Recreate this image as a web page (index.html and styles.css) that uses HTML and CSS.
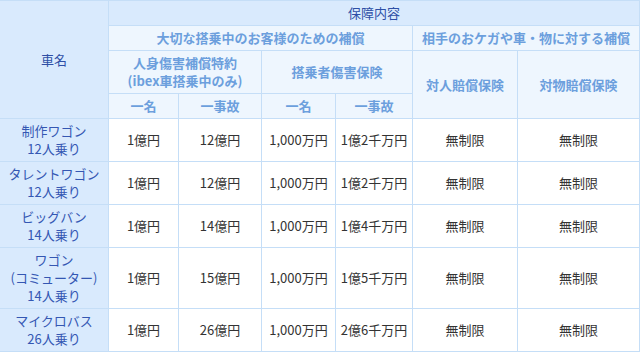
FILE: index.html
```html
<!DOCTYPE html>
<html lang="ja">
<head>
<meta charset="utf-8">
<title>補償内容</title>
<link rel="stylesheet" href="styles.css">
</head>
<body>
<div class="tbl">
  <div class="cell th-main c-name">車名</div>
  <div class="cell th-main c-cover">保障内容</div>
  <div class="cell th-sub c-own">大切な搭乗中のお客様のための補償</div>
  <div class="cell th-sub c-other">相手のおケガや車・物に対する補償</div>
  <div class="cell th-sub c-personal">人身傷害補償特約<br>(ibex車搭乗中のみ)</div>
  <div class="cell th-sub c-passenger">搭乗者傷害保険</div>
  <div class="cell th-sub c-bodily">対人賠償保険</div>
  <div class="cell th-sub c-property">対物賠償保険</div>
  <div class="cell th-sub">一名</div>
  <div class="cell th-sub">一事故</div>
  <div class="cell th-sub">一名</div>
  <div class="cell th-sub">一事故</div>

  <div class="cell car">制作ワゴン<br>12人乗り</div>
  <div class="cell td">1億円</div>
  <div class="cell td">12億円</div>
  <div class="cell td">1,000万円</div>
  <div class="cell td">1億2千万円</div>
  <div class="cell td">無制限</div>
  <div class="cell td">無制限</div>

  <div class="cell car">タレントワゴン<br>12人乗り</div>
  <div class="cell td">1億円</div>
  <div class="cell td">12億円</div>
  <div class="cell td">1,000万円</div>
  <div class="cell td">1億2千万円</div>
  <div class="cell td">無制限</div>
  <div class="cell td">無制限</div>

  <div class="cell car">ビッグバン<br>14人乗り</div>
  <div class="cell td">1億円</div>
  <div class="cell td">14億円</div>
  <div class="cell td">1,000万円</div>
  <div class="cell td">1億4千万円</div>
  <div class="cell td">無制限</div>
  <div class="cell td">無制限</div>

  <div class="cell car">ワゴン<br>(コミューター)<br>14人乗り</div>
  <div class="cell td">1億円</div>
  <div class="cell td">15億円</div>
  <div class="cell td">1,000万円</div>
  <div class="cell td">1億5千万円</div>
  <div class="cell td">無制限</div>
  <div class="cell td">無制限</div>

  <div class="cell car">マイクロバス<br>26人乗り</div>
  <div class="cell td">1億円</div>
  <div class="cell td">26億円</div>
  <div class="cell td">1,000万円</div>
  <div class="cell td">2億6千万円</div>
  <div class="cell td">無制限</div>
  <div class="cell td">無制限</div>
</div>
</body>
</html>
```

FILE: styles.css
```css
html, body {
  margin: 0;
  padding: 0;
  background: #ffffff;
}

.tbl {
  width: 640px;
  height: 352px;
  box-sizing: border-box;
  display: grid;
  grid-template-columns: 108px 69px 82px 73px 76px 104px 121px;
  grid-template-rows: 24px 24px 42px 24px 42px 42px 42px 60px 42px;
  gap: 1px;
  padding: 1px 1px 0 0;
  background: #c5def7;
  font-family: "Noto Sans CJK JP", "Noto Sans", sans-serif;
  font-size: 13px;
  line-height: 18px;
}

.cell {
  display: flex;
  align-items: center;
  justify-content: center;
  text-align: center;
  white-space: nowrap;
}

.th-main {
  background: #d9eafd;
  color: #2e4fa6;
}

.th-sub {
  background: #eef6fe;
  color: #6c9fdd;
  font-weight: bold;
}

.car {
  background: #d9eafd;
  color: #3457b3;
}

.td {
  background: #ffffff;
  color: #333333;
}

.c-name { grid-column: 1; grid-row: 1 / 5; }
.c-cover { grid-column: 2 / 8; grid-row: 1; }
.c-own { grid-column: 2 / 6; grid-row: 2; }
.c-other { grid-column: 6 / 8; grid-row: 2; }
.c-personal { grid-column: 2 / 4; grid-row: 3; }
.c-passenger { grid-column: 4 / 6; grid-row: 3; }
.c-bodily { grid-column: 6; grid-row: 3 / 5; }
.c-property { grid-column: 7; grid-row: 3 / 5; }
```
